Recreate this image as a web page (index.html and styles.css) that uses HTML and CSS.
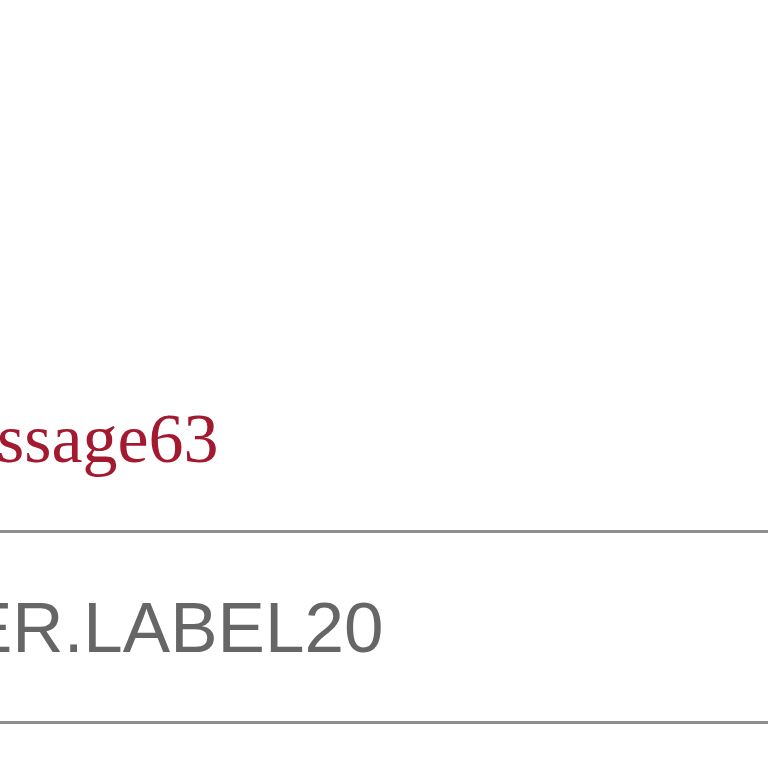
FILE: index.html
```html
<!DOCTYPE html>
<html>
<head>
<meta charset="utf-8">
<link rel="stylesheet" href="styles.css">
</head>
<body>
<div class="page">
  <div class="message">ssage63</div>
  <div class="row">
    <div class="label">ER.LABEL20</div>
  </div>
</div>
</body>
</html>
```
FILE: styles.css
```css
html, body {
  margin: 0;
  padding: 0;
  background: #ffffff;
  overflow: hidden;
}
.page {
  width: 768px;
  height: 768px;
  overflow: hidden;
}
.message {
  padding-top: 399px;
  margin-left: -3px;
  font-family: "Liberation Serif", "Times New Roman", serif;
  font-size: 70px;
  line-height: 80px;
  color: #a3192f;
  height: 80px;
  white-space: nowrap;
}
.row {
  margin-top: 51px;
  border-top: 3px solid #8e8e8e;
  border-bottom: 3px solid #8e8e8e;
  padding: 55px 0 53px 0;
}
.label {
  margin-left: -35px;
  font-family: "Liberation Sans", Arial, sans-serif;
  font-size: 71px;
  line-height: 80px;
  color: #666666;
  white-space: nowrap;
}
```
